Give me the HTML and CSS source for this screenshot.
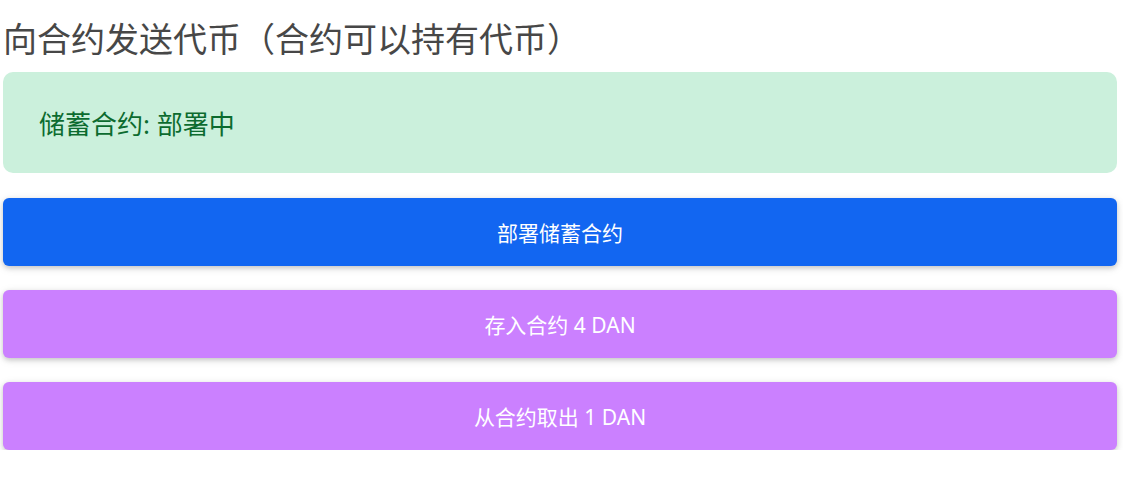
FILE: index.html
```html
<!DOCTYPE html>
<html lang="zh-CN">
<head>
<meta charset="utf-8">
<title>向合约发送代币</title>
<link rel="stylesheet" href="styles.css">
</head>
<body>
<div class="page">
  <h1 class="title">向合约发送代币（合约可以持有代币）</h1>
  <div class="alert">储蓄合约: 部署中</div>
  <div class="actions">
    <button class="btn btn-primary">部署储蓄合约</button>
    <button class="btn btn-purple">存入合约 4 DAN</button>
    <button class="btn btn-purple">从合约取出 1 DAN</button>
  </div>
</div>
</body>
</html>
```
FILE: styles.css
```css
html, body {
  margin: 0;
  padding: 0;
  background: #ffffff;
}
body {
  font-family: "Noto Sans", "Noto Sans CJK SC", sans-serif;
}
.page {
  width: 1114px;
  padding-left: 3px;
}
.title {
  margin: 20px 0 0 0;
  font-size: 34px;
  line-height: 38px;
  font-weight: 400;
  color: #474747;
  white-space: nowrap;
  text-spacing-trim: space-all;
  font-feature-settings: "halt" 0, "chws" 0;
}
.alert {
  margin-top: 14px;
  padding: 38px 36px 34px;
  line-height: 29px;
  font-size: 26px;
  color: #0c6b2f;
  background: #cbf0dc;
  border-radius: 10px;
}
.actions {
  margin-top: 25px;
  display: flex;
  flex-direction: column;
  gap: 24px;
}
.btn {
  display: block;
  width: 100%;
  height: 68px;
  border: 0;
  border-radius: 6px;
  font-family: "Noto Sans", "Noto Sans CJK SC", sans-serif;
  font-size: 21px;
  color: #ffffff;
  box-shadow: 0 2px 5px 0 rgba(0,0,0,0.16), 0 2px 10px 0 rgba(0,0,0,0.1);
  padding: 0;
}
.btn-primary {
  background: #1266f1;
}
.btn-purple {
  background: #cb80ff;
}
```
